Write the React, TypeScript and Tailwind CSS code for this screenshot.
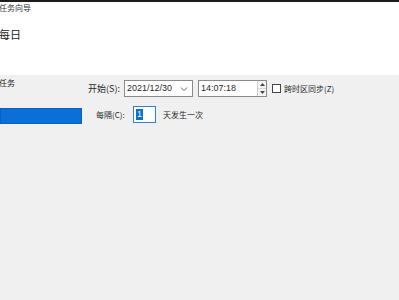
import React from "react";

const font = { fontFamily: '"Noto Sans CJK SC", "Liberation Sans", sans-serif' };

export default function App() {
  return (
    <div
      className="w-[399px] h-[300px] bg-[#f0f0f0] flex flex-col overflow-hidden text-[#1a1a1a]"
      style={font}
    >
      {/* header */}
      <div className="h-[75px] bg-white border-t-[2px] border-[#1c1c1c] flex flex-col shrink-0">
        <div className="text-[8px] leading-[10px] mt-[1px] text-[#333] -ml-[1px]">任务向导</div>
        <div className="text-[11px] leading-[14px] mt-[14px] -ml-[1px] text-[#222]">每日</div>
      </div>
      {/* body */}
      <div className="flex flex-1">
        <div className="w-[83px] flex flex-col">
          <div className="text-[8px] leading-[10px] mt-[3px] -ml-[1px] text-[#222]">任务</div>
          <div className="h-[16px] w-[82px] mt-[20px] bg-[#0a6fd6] border border-[#0860c0]"></div>
        </div>
        <div className="flex-1 flex flex-col pt-[5px] text-[9px] text-[#2a2a2a]">
          <div className="flex items-center h-[17px]">
            <span className="ml-[5px] w-[36px] leading-[12px]">开始(S):</span>
            <div className="w-[69px] h-[17px] bg-white border border-[#8a8a8a] flex items-center justify-between px-[2px]">
              <span style={{ fontFamily: '"Liberation Sans", sans-serif' }}>2021/12/30</span>
              <svg width="8" height="6" viewBox="0 0 8 6" className="mr-[2px]">
                <path d="M1 1.5 L4 4.5 L7 1.5" fill="none" stroke="#666" strokeWidth="1" />
              </svg>
            </div>
            <div className="ml-[5px] w-[69px] h-[17px] bg-white border border-[#8a8a8a] flex items-center justify-between pl-[2px]">
              <span style={{ fontFamily: '"Liberation Sans", sans-serif' }}>14:07:18</span>
              <div className="w-[9px] h-[15px] flex flex-col border-l border-[#d0d0d0] bg-[#f4f4f4]">
                <div className="flex-1 flex items-center justify-center border-b border-[#d6d6d6]">
                  <svg width="5" height="3" viewBox="0 0 5 3"><path d="M0 3 L2.5 0 L5 3 Z" fill="#444" /></svg>
                </div>
                <div className="flex-1 flex items-center justify-center">
                  <svg width="5" height="3" viewBox="0 0 5 3"><path d="M0 0 L2.5 3 L5 0 Z" fill="#444" /></svg>
                </div>
              </div>
            </div>
            <div className="ml-[5px] w-[9px] h-[9px] bg-white border border-[#444]"></div>
            <span className="ml-[3px] text-[8px]">跨时区同步(Z)</span>
          </div>
          <div className="flex items-center h-[17px] mt-[9px]">
            <span className="ml-[13px] w-[37px] text-[8px] leading-[12px]">每隔(C):</span>
            <div className="w-[23px] h-[17px] bg-white border border-[#2f7fd0] flex items-center pl-[2px]">
              <span className="bg-[#0a6fd6] text-white px-[1px] leading-[11px]" style={{ fontFamily: '"Liberation Sans", sans-serif' }}>1</span>
            </div>
            <span className="ml-[7px] text-[8px]">天发生一次</span>
          </div>
        </div>
      </div>
    </div>
  );
}
